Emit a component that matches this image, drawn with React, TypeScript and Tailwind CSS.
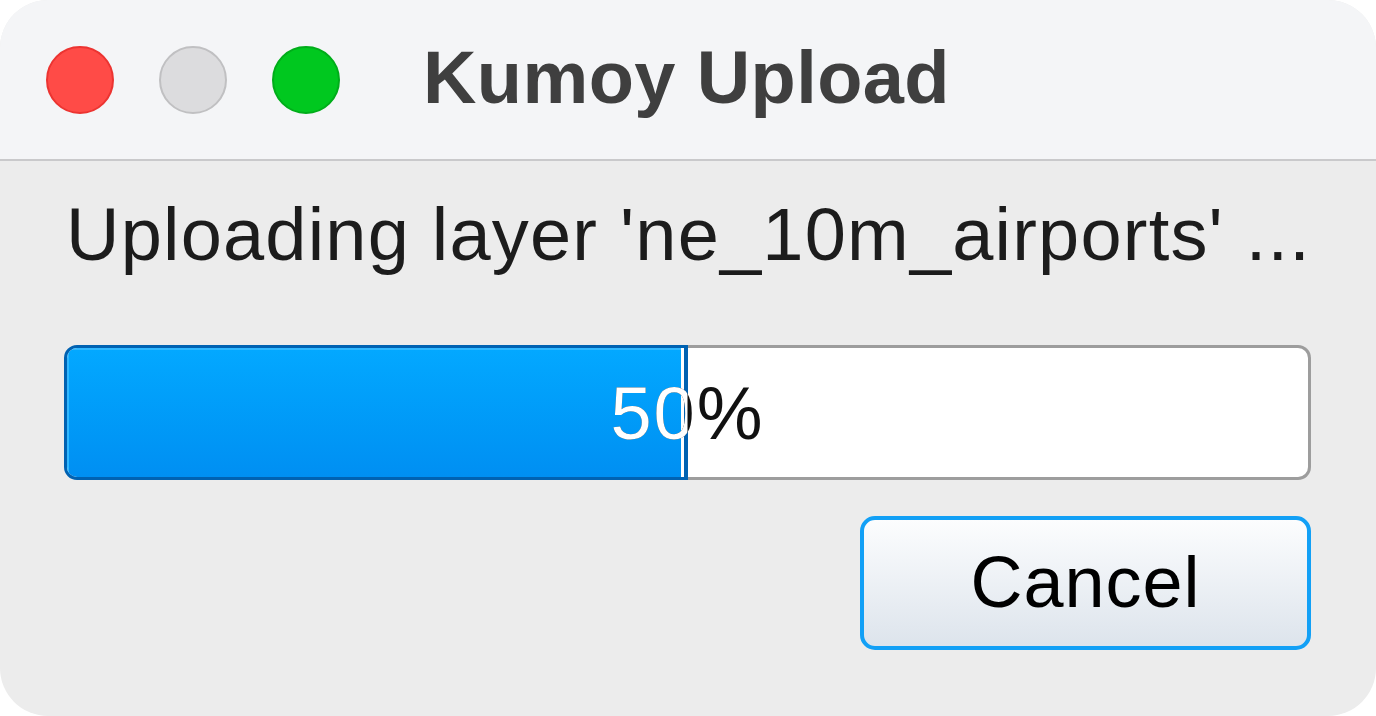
import React from "react";

export default function App() {
  const font = { fontFamily: '"Liberation Sans", Arial, sans-serif' };
  return (
    <div className="w-[1376px] h-[716px] bg-white" style={font}>
      <div className="w-full h-full rounded-[48px] overflow-hidden bg-[#ececec] flex flex-col">
        {/* Title bar */}
        <div className="h-[161px] bg-[#f4f5f7] border-b-[2px] border-[#c9c9cb] flex items-center pl-[46px] shrink-0">
          <div className="flex items-center gap-[45px]">
            <div className="w-[68px] h-[68px] rounded-full bg-[#ff4b47] border-[2px] border-[#ec3431]" />
            <div className="w-[68px] h-[68px] rounded-full bg-[#dcdcde] border-[2px] border-[#c0c0c2]" />
            <div className="w-[68px] h-[68px] rounded-full bg-[#00c81f] border-[2px] border-[#00ad1a]" />
          </div>
          <div className="ml-[83px] mb-[4px] text-[74px] font-bold tracking-[0.4px] text-[#3f3f3f] leading-none">
            Kumoy Upload
          </div>
        </div>

        {/* Body */}
        <div className="flex flex-col pl-[64px] pr-[65px] pt-[32px]">
          <div className="ml-[2px] text-[74px] leading-[84px] tracking-[1.2px] text-[#1c1c1c] whitespace-nowrap">
            Uploading layer 'ne_10m_airports' ...
          </div>

          {/* Progress bar */}
          <div className="relative mt-[68px] h-[135px] flex">
            <div className="w-1/2 flex rounded-l-[13px] border-[3px] border-r-[4px] border-[#0062b2] overflow-hidden">
              <div className="flex-1 bg-gradient-to-b from-[#03a8ff] to-[#008ff2] border-t-[2px] border-l-[2px] border-[#30b8ff]" />
              <div className="w-[3px] bg-white" />
            </div>
            <div className="w-1/2 rounded-r-[13px] border-[3px] border-l-0 border-[#9d9d9d] bg-white" />
            <div className="absolute inset-0 flex items-center justify-center text-[74px] tracking-[2px] text-[#111111] leading-none pt-[2px]">
              50%
            </div>
            <div className="absolute inset-0 flex items-center justify-center text-[74px] tracking-[2px] text-white leading-none pt-[2px] [clip-path:inset(0_50%_0_0)]">
              50%
            </div>
          </div>

          {/* Button row */}
          <div className="flex justify-end mt-[36px]">
            <button className="w-[451px] h-[134px] rounded-[15px] border-[4px] border-[#12a0f6] bg-gradient-to-b from-[#fcfdfe] to-[#dde4ec] text-[72px] tracking-[1px] text-black leading-none pb-[2px]">
              Cancel
            </button>
          </div>
        </div>
      </div>
    </div>
  );
}
